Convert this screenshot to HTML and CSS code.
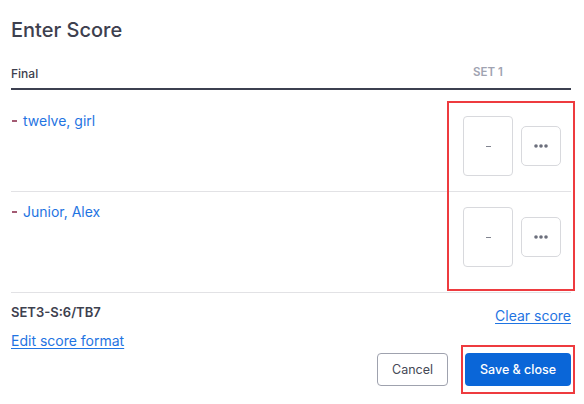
FILE: index.html
```html
<!DOCTYPE html>
<html lang="en">
<head>
<meta charset="utf-8">
<title>Enter Score</title>
<link rel="stylesheet" href="styles.css">
</head>
<body>
<div class="dialog">
  <h1 class="title">Enter Score</h1>
  <div class="table">
    <div class="thead">
      <span class="th-name">Final</span>
      <span class="th-set">SET 1</span>
    </div>
    <div class="row row-first">
      <div class="player"><span class="dash"></span><a class="name" href="#">twelve, girl</a></div>
      <div class="cells">
        <div class="score"><span class="score-dash"></span></div>
        <button class="more" type="button" aria-label="More">
          <svg width="14" height="4" viewBox="0 0 14 4"><circle cx="2" cy="2" r="1.8"/><circle cx="7" cy="2" r="1.8"/><circle cx="12" cy="2" r="1.8"/></svg>
        </button>
      </div>
    </div>
    <div class="row row-second">
      <div class="player"><span class="dash"></span><a class="name" href="#">Junior, Alex</a></div>
      <div class="cells">
        <div class="score"><span class="score-dash"></span></div>
        <button class="more" type="button" aria-label="More">
          <svg width="14" height="4" viewBox="0 0 14 4"><circle cx="2" cy="2" r="1.8"/><circle cx="7" cy="2" r="1.8"/><circle cx="12" cy="2" r="1.8"/></svg>
        </button>
      </div>
    </div>
    <div class="highlight"></div>
  </div>
  <div class="format-row">
    <span class="format">SET3-S:6/TB7</span>
    <a class="link clear" href="#">Clear score</a>
  </div>
  <a class="link edit" href="#">Edit score format</a>
  <div class="actions">
    <button class="btn btn-cancel" type="button">Cancel</button>
    <div class="save-ring"><button class="btn btn-save" type="button">Save &amp; close</button></div>
  </div>
</div>
</body>
</html>
```

FILE: styles.css
```css
* { box-sizing: border-box; }
html, body { margin: 0; padding: 0; background: #fff; }
body {
  font-family: Inter, "Noto Sans", "Liberation Sans", sans-serif;
  color: #3d404e;
  width: 584px;
  height: 404px;
  overflow: hidden;
}
.dialog {
  padding: 18px 13px 0 11px;
}
.title {
  margin: 0;
  font-size: 20px;
  line-height: 24px;
  font-weight: 500;
  color: #3d404e;
}
.table {
  position: relative;
}
.thead {
  display: flex;
  align-items: flex-start;
  justify-content: space-between;
  padding: 24px 0 6px;
  border-bottom: 2px solid #3c4050;
}
.th-name {
  font-size: 12px;
  line-height: 16px;
  font-weight: 500;
  color: #3d404e;
}
.th-set {
  width: 50px;
  margin: -2px 58px 0 0;
  text-align: center;
  font-size: 11.5px;
  line-height: 16px;
  font-weight: 600;
  color: #a0a3b1;
}
.row {
  display: flex;
  justify-content: space-between;
  align-items: flex-start;
  border-bottom: 1px solid #e2e2e5;
  padding-right: 10px;
}
.row-first { height: 102px; padding-top: 26px; }
.row-second { height: 101px; padding-top: 15px; }
.player {
  display: flex;
  align-items: center;
  margin-top: -4px;
  font-size: 14px;
  line-height: 17px;
}
.dash {
  width: 5px;
  height: 2px;
  background: #a35a73;
  margin: 1px 6px 0 1px;
}
.name {
  color: #1f74e2;
  text-decoration: none;
}
.cells {
  display: flex;
  align-items: center;
  gap: 8px;
}
.score {
  width: 50px;
  height: 60px;
  border: 1px solid #d8d9dd;
  border-radius: 4px;
  display: flex;
  align-items: center;
  justify-content: center;
}
.score-dash {
  width: 5px;
  height: 1px;
  background: #80838f;
}
.more {
  width: 40px;
  height: 40px;
  border: 1px solid #d8d9dd;
  border-radius: 5px;
  background: #fff;
  padding: 0;
  display: flex;
  align-items: center;
  justify-content: center;
}
.more svg { fill: #6c6f7c; display: block; }
.highlight {
  position: absolute;
  left: 436px;
  top: 59px;
  width: 128px;
  height: 190px;
  border: 2px solid #ee3b3f;
  pointer-events: none;
}
.format-row {
  display: flex;
  justify-content: space-between;
  align-items: center;
  margin-top: 6px;
}
.format {
  font-size: 13px;
  line-height: 16px;
  font-weight: 600;
  color: #3d404e;
}
.link {
  color: #1f74e2;
  text-decoration: underline;
  text-underline-offset: 2px;
  font-size: 14px;
  line-height: 17px;
}
.clear { margin-top: 8px; }
.edit {
  display: inline-block;
  margin-top: 8px;
}
.actions {
  display: flex;
  justify-content: flex-end;
  align-items: center;
  gap: 13px;
  margin-top: -5px;
  margin-right: -4px;
}
.btn {
  font-family: inherit;
  font-size: 12.5px;
  height: 33px;
  border-radius: 4px;
  cursor: pointer;
}
.btn-cancel {
  width: 71px;
  background: #fff;
  border: 1px solid #9fa2ae;
  color: #454856;
}
.save-ring {
  border: 2px solid #ee3b3f;
  padding: 6px 2px;
}
.btn-save {
  display: block;
  width: 106px;
  background: #0a66d8;
  border: none;
  color: #fff;
  font-weight: 500;
}
```
